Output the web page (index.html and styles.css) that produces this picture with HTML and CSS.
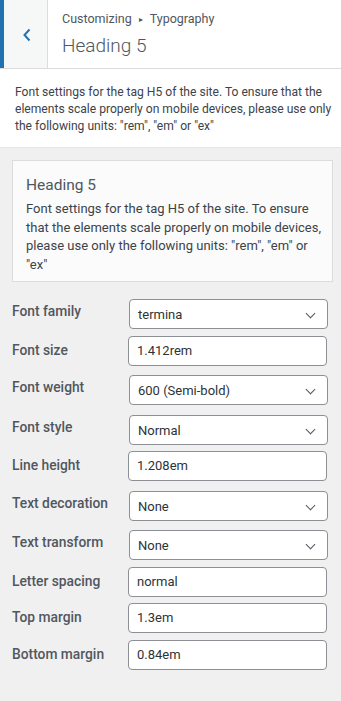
FILE: index.html
```html
<!DOCTYPE html>
<html lang="en">
<head>
<meta charset="utf-8">
<title>Heading 5</title>
<link rel="stylesheet" href="styles.css">
</head>
<body>
<div class="panel">
  <header class="head">
    <button class="back" type="button" aria-label="Back">
      <svg width="10" height="14" viewBox="0 0 10 14"><path d="M7.5 1.5 L2.5 7 L7.5 12.5" fill="none" stroke="#2271b1" stroke-width="2"/></svg>
    </button>
    <div class="titles">
      <div class="crumb">Customizing <span class="tri">▸</span> Typography</div>
      <div class="title">Heading 5</div>
    </div>
  </header>
  <div class="desc">Font settings for the tag H5 of the site. To ensure that the elements scale properly on mobile devices, please use only the following units: "rem", "em" or "ex"</div>
  <div class="body">
    <div class="card">
      <div class="card-title">Heading 5</div>
      <div class="card-text">Font settings for the tag H5 of the site. To ensure that the elements scale properly on mobile devices, please use only the following units: "rem", "em" or "ex"</div>
    </div>
    <div class="rows">
      <div class="row sel"><div class="lbl">Font family</div><div class="select">termina<span class="chev"></span></div></div>
      <div class="row"><div class="lbl">Font size</div><div class="input">1.412rem</div></div>
      <div class="row sel"><div class="lbl">Font weight</div><div class="select">600 (Semi-bold)<span class="chev"></span></div></div>
      <div class="row sel"><div class="lbl">Font style</div><div class="select">Normal<span class="chev"></span></div></div>
      <div class="row"><div class="lbl">Line height</div><div class="input">1.208em</div></div>
      <div class="row sel"><div class="lbl">Text decoration</div><div class="select">None<span class="chev"></span></div></div>
      <div class="row sel"><div class="lbl">Text transform</div><div class="select">None<span class="chev"></span></div></div>
      <div class="row"><div class="lbl">Letter spacing</div><div class="input">normal</div></div>
      <div class="row"><div class="lbl">Top margin</div><div class="input">1.3em</div></div>
      <div class="row"><div class="lbl">Bottom margin</div><div class="input">0.84em</div></div>
    </div>
  </div>
</div>
</body>
</html>
```
FILE: styles.css
```css
* { box-sizing: border-box; }
html, body { margin: 0; padding: 0; }
body {
  background: #f0f0f1;
  font-family: Roboto, "Liberation Sans", sans-serif;
  font-size: 12.1px;
  color: #3c434a;
  width: 341px;
  height: 701px;
  overflow: hidden;
}
.head {
  display: flex;
  height: 69px;
  background: #fff;
  border-bottom: 1px solid #dcdcde;
}
.back {
  width: 48px;
  height: 68px;
  margin: 0;
  padding: 0;
  background: #f6f7f7;
  border: 0;
  border-left: 4px solid #2271b1;
  border-right: 1px solid #dcdcde;
  display: flex;
  align-items: center;
  justify-content: center;
}
.back svg { display: block; margin-left: 2px; margin-top: 1px; }
.titles {
  padding: 10px 0 0 14px;
}
.crumb {
  font-size: 12.5px;
  line-height: 18px;
  color: #50575e;
}
.tri { font-size: 8px; position: relative; top: -1px; padding: 0 4px; }
.title {
  font-size: 19px;
  font-weight: 300;
  line-height: 26px;
  margin-top: 3px;
  color: #50575e;
}
.desc {
  background: #fff;
  padding: 15px 6px 12px 15px;
  line-height: 17px;
  height: 79px;
  border-bottom: 1px solid #e5e5e5;
  color: #3c434a;
}
.body { padding: 12px 8px 0 12px; }
.card {
  width: 321px;
  background: #fbfbfb;
  border: 1px solid #dcdcde;
  padding: 13px 8px 7px 13px;
  margin-bottom: 14px;
}
.card-title {
  font-size: 15.5px;
  color: #50575e;
  line-height: 22px;
  margin-bottom: 4px;
}
.card-text {
  font-size: 13px;
  line-height: 18.5px;
  color: #3c434a;
}
.rows { display: flex; flex-direction: column; }
.row {
  display: flex;
  align-items: flex-start;
  margin-bottom: 6.5px;
}
.row.sel { padding-top: 3px; }
.lbl {
  width: 116px;
  flex: none;
  font-size: 13.8px;
  font-weight: 500;
  color: #50575e;
  line-height: 18px;
  padding-top: 5px;
}
.row.sel .lbl { padding-top: 3px; }
.select, .input {
  flex: none;
  width: 199px;
  height: 30px;
  background: #fff;
  border: 1px solid #8c8f94;
  border-radius: 4px;
  padding: 0 8px;
  line-height: 30px;
  font-size: 13px;
  color: #2c3338;
  display: flex;
  align-items: center;
  position: relative;
}
.select { padding-top: 2px; margin-left: 1px; }
.chev {
  position: absolute;
  right: 13px;
  top: 10px;
  width: 7px;
  height: 7px;
  border-right: 1.6px solid #50575e;
  border-bottom: 1.6px solid #50575e;
  transform: rotate(45deg);
}
```
